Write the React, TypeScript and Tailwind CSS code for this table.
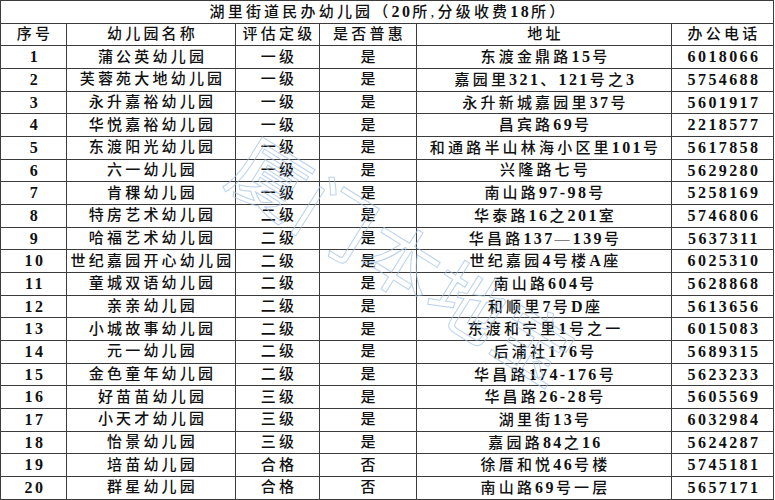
const rows: [string, string, string, string, string, string][] = [
  ["1", "蒲公英幼儿园", "一级", "是", "东渡金鼎路15号", "6018066"],
  ["2", "芙蓉苑大地幼儿园", "一级", "是", "嘉园里321、121号之3", "5754688"],
  ["3", "永升嘉裕幼儿园", "一级", "是", "永升新城嘉园里37号", "5601917"],
  ["4", "华悦嘉裕幼儿园", "一级", "是", "昌宾路69号", "2218577"],
  ["5", "东渡阳光幼儿园", "一级", "是", "和通路半山林海小区里101号", "5617858"],
  ["6", "六一幼儿园", "一级", "是", "兴隆路七号", "5629280"],
  ["7", "肯稞幼儿园", "一级", "是", "南山路97-98号", "5258169"],
  ["8", "特房艺术幼儿园", "二级", "是", "华泰路16之201室", "5746806"],
  ["9", "哈福艺术幼儿园", "二级", "是", "华昌路137—139号", "5637311"],
  ["10", "世纪嘉园开心幼儿园", "二级", "是", "世纪嘉园4号楼A座", "6025310"],
  ["11", "童城双语幼儿园", "二级", "是", "南山路604号", "5628868"],
  ["12", "亲亲幼儿园", "二级", "是", "和顺里7号D座", "5613656"],
  ["13", "小城故事幼儿园", "二级", "是", "东渡和宁里1号之一", "6015083"],
  ["14", "元一幼儿园", "二级", "是", "后浦社176号", "5689315"],
  ["15", "金色童年幼儿园", "二级", "是", "华昌路174-176号", "5623233"],
  ["16", "好苗苗幼儿园", "三级", "是", "华昌路26-28号", "5605569"],
  ["17", "小天才幼儿园", "三级", "是", "湖里街13号", "6032984"],
  ["18", "怡景幼儿园", "三级", "是", "嘉园路84之16", "5624287"],
  ["19", "培苗幼儿园", "合格", "否", "徐厝和悦46号楼", "5745181"],
  ["20", "群星幼儿园", "合格", "否", "南山路69号一层", "5657171"],
];

const headers = ["序号", "幼儿园名称", "评估定级", "是否普惠", "地址", "办公电话"];

const cell =
  "border border-[#3c3c3c] p-0 pl-[3px] text-center align-middle whitespace-nowrap overflow-hidden";

// latin runs (digits, letters) are bold serif in the source sheet
function Txt({ value }: { value: string }) {
  const parts = value.split(/([0-9A-Za-z\-]+)/);
  return (
    <>
      {parts.map((p, i) =>
        /^[0-9A-Za-z\-]+$/.test(p) ? (
          <span key={i} className="font-bold text-[16px] tracking-[2.4px]">
            {p}
          </span>
        ) : (
          <span key={i}>{p}</span>
        )
      )}
    </>
  );
}

export default function App() {
  return (
    <div className="relative w-[775px] h-[500px] bg-white overflow-hidden">
      <table
        className="table-fixed border-collapse w-[773px] text-[15px] tracking-[3.2px] leading-none text-[#111] font-medium"
        style={{ fontFamily: '"Liberation Serif", "Noto Sans CJK SC", serif' }}
      >
        <colgroup>
          <col className="w-[66px]" />
          <col className="w-[169px]" />
          <col className="w-[84px]" />
          <col className="w-[97px]" />
          <col className="w-[255px]" />
          <col className="w-[102px]" />
        </colgroup>
        <tbody>
          <tr className="h-[22.68px]">
            <td colSpan={6} className={cell}>
              <Txt value="湖里街道民办幼儿园（20所,分级收费18所）" />
            </td>
          </tr>
          <tr className="h-[22.68px]">
            {headers.map((h) => (
              <td key={h} className={cell}>
                {h}
              </td>
            ))}
          </tr>
          {rows.map((r) => (
            <tr key={r[0]} className="h-[22.68px]">
              {r.map((v, i) => (
                <td key={i} className={cell}>
                  <Txt value={v} />
                </td>
              ))}
            </tr>
          ))}
        </tbody>
      </table>

      {/* faint outlined watermark */}
      <span
        className="pointer-events-none absolute left-[210px] top-[220px] whitespace-nowrap text-[76px] leading-none tracking-[2px] text-transparent rotate-[32deg] opacity-70 [-webkit-text-stroke:1px_#9fc0e4]"
        style={{ fontFamily: '"Noto Sans CJK SC", sans-serif' }}
      >
        厦门本地宝
      </span>
    </div>
  );
}
